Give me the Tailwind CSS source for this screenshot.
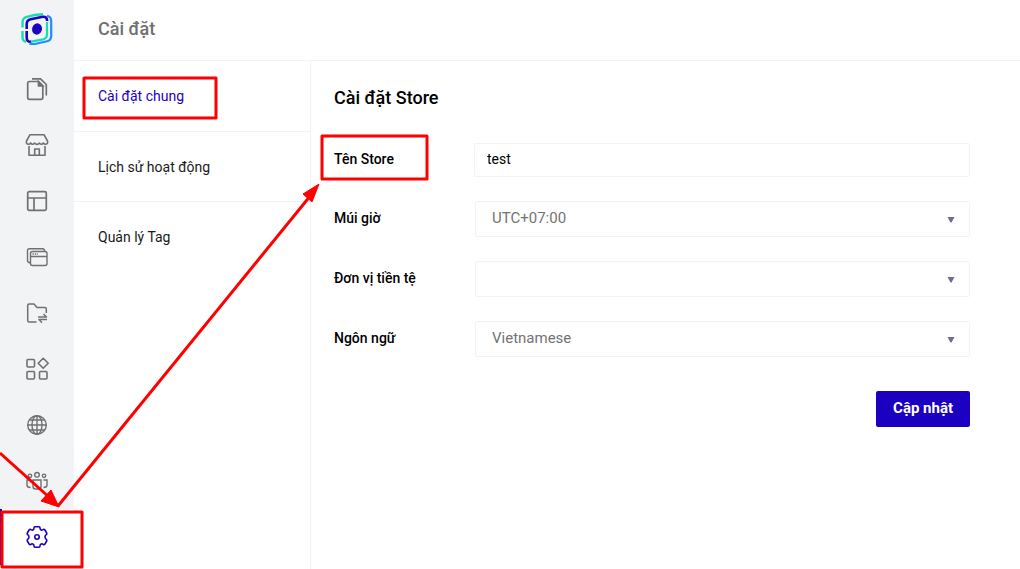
<!DOCTYPE html>
<html lang="vi">
<head>
<meta charset="utf-8">
<meta name="viewport" content="width=device-width, initial-scale=1">
<title>Cài đặt</title>
<script src="https://cdn.jsdelivr.net/npm/@tailwindcss/browser@4"></script>
</head>
<body class="relative flex min-h-screen overflow-x-hidden bg-white font-['Roboto','Noto_Sans',sans-serif] text-sm text-black">

<nav aria-label="Menu" class="flex w-[74px] shrink-0 flex-col text-[#707070]">
  <a href="#" aria-label="Trang chủ" class="flex h-[61px] items-center justify-center bg-[#f1f3f5] pb-1">
    <svg class="size-8" viewBox="0 0 32 32" fill="none">
      <path d="M22 1.300C15 1.500 9 3 5 4.200C2 5.200 1.500 7 1.500 10V14.500" stroke="#18dcb4" stroke-width="2.400"/>
      <path d="M1.500 18V24C1.500 27 2.500 28.300 5 28.800" stroke="#18dcb4" stroke-width="2.400"/>
      <path d="M26 9V21.500C26 24.500 25 25.600 22 26.400L9 28.800" stroke="#18dcb4" stroke-width="2.200"/>
      <path d="M5.700 16V11C5.700 8 6.700 7 9.700 6.300L20.500 4C24.500 3.200 26 4.500 26.200 8" stroke="#2000c0" stroke-width="2.600"/>
      <path d="M5.700 18V24.500C5.700 27.500 7 29 10 28.800" stroke="#2000c0" stroke-width="2.600"/>
      <path d="M26 2.800C29.500 3.500 30.200 5.500 30.200 8V23C30.200 26 29.500 27.500 26 28.300L15 30.700C12 31.300 10 31.200 8.500 30.500" stroke="#218cff" stroke-width="2.200"/>
      <ellipse cx="16" cy="16" rx="4.900" ry="5.700" transform="rotate(20 16 16)" fill="#2000c0"/>
    </svg>
  </a>
  <a href="#" aria-label="Trang" class="flex h-14 items-center justify-center bg-[#f1f3f5]">
    <svg class="size-6" viewBox="0 0 24 24" fill="none" stroke="currentColor" stroke-width="1.700">
      <path d="M13.500 4.500H4.500Q2.700 4.500 2.700 6.300V20.500Q2.700 22.300 4.500 22.300H16Q17.800 22.300 17.800 20.500V9Z"/><path d="M13.500 4.500V9H17.800Z" fill="currentColor"/><path d="M7 1.800H15.500L21.300 7.500V18.500"/>
    </svg>
  </a>
  <a href="#" aria-label="Cửa hàng" class="flex h-14 items-center justify-center bg-[#f1f3f5]">
    <svg class="size-6" viewBox="0 0 24 24" fill="none" stroke="currentColor" stroke-width="1.600" stroke-linejoin="round">
      <path d="M5 1.700H19L22.500 8Q23.300 10.700 20.800 11.300Q19 11.300 18.300 10Q16.500 12.500 14.500 10.200Q12 12.500 9.500 10.200Q7.500 12.500 5.700 10Q5 11.300 3.200 11.300Q.7 10.700 1.500 8Z"/><path d="M4 13V22.300H20V13M9.700 22.300V16H14.300V22.300"/>
    </svg>
  </a>
  <a href="#" aria-label="Bố cục" class="flex h-14 items-center justify-center bg-[#f1f3f5]">
    <svg class="size-6" viewBox="0 0 24 24" fill="none" stroke="currentColor" stroke-width="1.700">
      <rect x="2.700" y="2.700" width="18.600" height="18.600" rx="1.500"/><path d="M3 9H21M9 9V21"/>
    </svg>
  </a>
  <a href="#" aria-label="Cửa sổ" class="flex h-14 items-center justify-center bg-[#f1f3f5]">
    <svg class="size-6" viewBox="0 0 24 24" fill="none" stroke="currentColor" stroke-width="1.400">
      <rect x="5.500" y="6.500" width="16.500" height="14" rx="2"/><path d="M5.500 11.500H22M19.700 6.300Q19.500 3.700 17.500 3.700H4.500Q2.500 3.700 2.500 5.700V15.500Q2.500 17.500 5.300 17.800"/><path d="M7.500 9H13" stroke-dasharray="1.400 1"/>
    </svg>
  </a>
  <a href="#" aria-label="Tệp chuyển" class="flex h-14 items-center justify-center bg-[#f1f3f5]">
    <svg class="size-6" viewBox="0 0 24 24" fill="none" stroke="currentColor" stroke-width="1.500" stroke-linejoin="round">
      <path d="M11.500 21H4.200Q2.700 21 2.700 19.500V4.500Q2.700 3 4.200 3H9L12 6.500H20Q21.300 6.500 21.300 8V12"/><path d="M13 16H21.500L18.500 13M22 18.500H14L17 21.800"/>
    </svg>
  </a>
  <a href="#" aria-label="Ứng dụng" class="flex h-14 items-center justify-center bg-[#f1f3f5]">
    <svg class="size-6" viewBox="0 0 24 24" fill="none" stroke="currentColor" stroke-width="1.600" stroke-linejoin="round">
      <rect x="2" y="2.500" width="7.500" height="7.500" rx="1"/><rect x="2" y="14.500" width="7.500" height="7.500" rx="1"/><rect x="14.500" y="14.500" width="7.500" height="7.500" rx="1"/><path d="M18.200 1.300L23.200 6.300L18.200 11.300L13.200 6.300Z"/>
    </svg>
  </a>
  <a href="#" aria-label="Tên miền" class="flex h-14 items-center justify-center bg-[#f1f3f5]">
    <svg class="size-6" viewBox="0 0 24 24" fill="none" stroke="currentColor" stroke-width="1.400">
      <circle cx="12" cy="12" r="9.300"/><ellipse cx="12" cy="12" rx="5" ry="9.300"/><path d="M12 2.700V21.300M2.700 12H21.300M4.500 7H19.500M4.500 17H19.500"/>
    </svg>
  </a>
  <a href="#" aria-label="Khách hàng" class="flex h-14 items-center justify-center bg-[#f1f3f5]">
    <svg class="size-6" viewBox="0 0 24 24" fill="none" stroke="currentColor" stroke-width="1.400">
      <circle cx="12" cy="5.800" r="2.300"/><circle cx="5" cy="6.800" r="1.700"/><circle cx="19" cy="6.800" r="1.700"/><path d="M8 11H16V17.500Q16 20 13.500 20H10.500Q8 20 8 17.500ZM5.500 11H2V16Q2 18.500 5.500 18.500M18.500 11H22V16Q22 18.500 18.500 18.500"/>
    </svg>
  </a>
  <a href="#" aria-label="Cài đặt" aria-current="page" class="flex h-14 items-center justify-center border-l-2 border-[#1c00c2] bg-white pr-0.5 text-[#1c00c2]">
    <svg class="size-6" viewBox="0 0 24 24" fill="none" stroke="currentColor" stroke-width="1.600" stroke-linejoin="round">
      <circle cx="12" cy="12" r="2.200"/><path d="M10 1.800H14Q15 1.800 15 3Q15 4.500 16.100 4.900Q17.200 5.400 18.300 4.500Q19.200 4 19.900 5L21.700 8Q22.200 9 21.300 9.700Q20 10.700 20 12Q20 13.300 21.300 14.300Q22.200 15 21.700 16L19.900 19Q19.200 20 18.300 19.500Q17.200 18.600 16.100 19.100Q15 19.500 15 21Q15 22.200 14 22.200H10Q9 22.200 9 21Q9 19.500 7.900 19.100Q6.800 18.600 5.700 19.500Q4.800 20 4.100 19L2.300 16Q1.800 15 2.700 14.300Q4 13.300 4 12Q4 10.700 2.700 9.700Q1.800 9 2.300 8L4.100 5Q4.800 4 5.700 4.500Q6.800 5.400 7.900 4.900Q9 4.500 9 3Q9 1.800 10 1.800Z"/>
    </svg>
  </a>
</nav>

<div class="flex min-w-0 flex-1 flex-col">
  <header class="flex h-[61px] items-center border-b border-[#f1f3f5] px-6 pb-0.5">
    <h1 class="text-lg font-medium text-[#6f6f6f]">Cài đặt</h1>
  </header>
  <div class="flex flex-1">
    <aside class="w-[237px] shrink-0 border-r border-[#f1f3f5]">
      <ul>
        <li><a href="#" aria-current="page" class="flex h-[71px] items-center border-b border-[#f1f3f5] px-6 text-[#1c00c2]">Cài đặt chung</a></li>
        <li><a href="#" class="flex h-[70px] items-center border-b border-[#f1f3f5] px-6 text-[#1a1a1a]">Lịch sử hoạt động</a></li>
        <li><a href="#" class="flex h-[70px] items-center px-6 text-[#1a1a1a]">Quản lý Tag</a></li>
      </ul>
    </aside>
    <main class="min-w-0 flex-1 pt-[23px] pr-[50px] pl-[23px]">
      <h2 class="text-lg/7 font-medium">Cài đặt Store</h2>
      <form class="mt-[31px] flex flex-col gap-6">
        <div class="flex items-center">
          <label for="store" class="w-[140px] shrink-0 pb-0.5 font-medium">Tên Store</label>
          <input id="store" type="text" value="test" class="h-[34px] min-w-0 flex-1 rounded-xs border border-[#f1f3f5] px-3 pb-0.5 outline-none">
        </div>
        <div class="flex items-center">
          <label for="tz" class="w-[141px] shrink-0 pb-0.5 font-medium">Múi giờ</label>
          <div class="relative min-w-0 flex-1">
            <select id="tz" class="block h-9 w-full appearance-none rounded-xs border border-[#f1f3f5] bg-white px-4 text-[15px] text-[#737373] outline-none"><option>UTC+07:00</option></select>
            <svg class="pointer-events-none absolute top-4 right-[15px] h-1.5 w-2" viewBox="0 0 8 6" fill="#6b6f8d"><path d="M.5 0H7.500L4.500 5.500H3.500Z"/></svg>
          </div>
        </div>
        <div class="flex items-center">
          <label for="currency" class="w-[141px] shrink-0 pb-0.5 font-medium">Đơn vị tiền tệ</label>
          <div class="relative min-w-0 flex-1">
            <select id="currency" class="block h-9 w-full appearance-none rounded-xs border border-[#f1f3f5] bg-white px-4 text-[15px] text-[#737373] outline-none"><option></option></select>
            <svg class="pointer-events-none absolute top-4 right-[15px] h-1.5 w-2" viewBox="0 0 8 6" fill="#6b6f8d"><path d="M.5 0H7.500L4.500 5.500H3.500Z"/></svg>
          </div>
        </div>
        <div class="flex items-center">
          <label for="lang" class="w-[141px] shrink-0 pb-0.5 font-medium">Ngôn ngữ</label>
          <div class="relative min-w-0 flex-1">
            <select id="lang" class="block h-9 w-full appearance-none rounded-xs border border-[#f1f3f5] bg-white px-4 text-[15px] text-[#737373] outline-none"><option>Vietnamese</option></select>
            <svg class="pointer-events-none absolute top-4 right-[15px] h-1.5 w-2" viewBox="0 0 8 6" fill="#6b6f8d"><path d="M.5 0H7.500L4.500 5.500H3.500Z"/></svg>
          </div>
        </div>
        <button type="button" class="mt-2.5 h-9 self-end rounded-xs bg-[#1c00c2] px-[17px] text-[15px] font-bold text-white">Cập nhật</button>
      </form>
    </main>
  </div>
</div>

<!-- Guide marks laid over the page: boxes and arrows -->
<svg class="pointer-events-none absolute top-0 left-0 h-[569px] w-[1020px]" viewBox="0 0 1020 569" fill="none" stroke="#ff0000" stroke-width="3" stroke-linejoin="round" aria-hidden="true">
  <rect x="84" y="78" width="132" height="40"/>
  <rect x="322" y="136" width="105" height="43"/>
  <rect x="2" y="512" width="80" height="55"/>
  <path d="M0 453L50 498M58 506L311 195"/>
  <path d="M59 507L51 490L41 501Z M319 184L303 194L312 202Z" fill="#ff0000" stroke-width="1"/>
</svg>
</body>
</html>
